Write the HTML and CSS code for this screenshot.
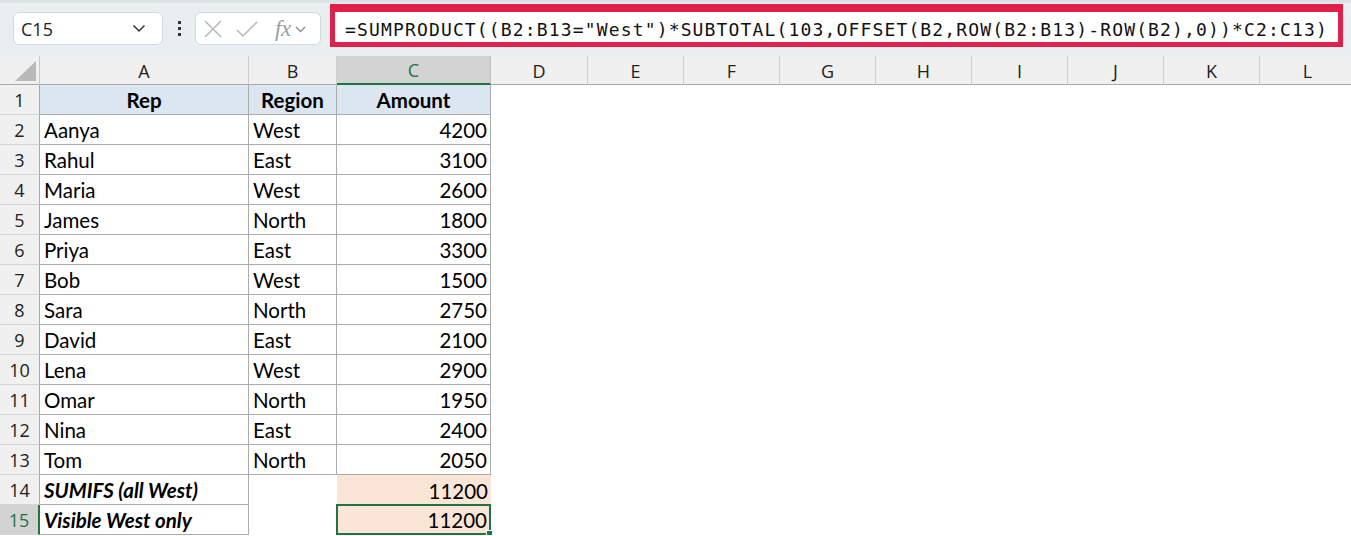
FILE: index.html
```html
<!DOCTYPE html>
<html>
<head>
<meta charset="utf-8">
<title>Sheet</title>
<link rel="stylesheet" href="styles.css">
</head>
<body>
<div class="bar">
  <div class="namebox">
    <span class="ref">C15</span>
    <svg class="chev" width="14" height="9" viewBox="0 0 14 9"><path d="M1.5 1.5 L7 7 L12.5 1.5" fill="none" stroke="#333" stroke-width="1.5"/></svg>
  </div>
  <div class="dots"><i></i><i></i><i></i></div>
  <div class="fxbox">
    <svg class="ico" width="20" height="20" viewBox="0 0 20 20"><path d="M2 2 L18 18 M18 2 L2 18" fill="none" stroke="#b5b8bb" stroke-width="1.5"/></svg>
    <svg class="ico" width="24" height="20" viewBox="0 0 24 20"><path d="M2 11 L8 17 L22 3" fill="none" stroke="#b5b8bb" stroke-width="1.5"/></svg>
    <span class="fx">fx</span>
    <svg class="chev2" width="11" height="7" viewBox="0 0 11 7"><path d="M1 1 L5.5 5.5 L10 1" fill="none" stroke="#8a8d90" stroke-width="1.3"/></svg>
  </div>
  <div class="formula">=SUMPRODUCT((B2:B13="West")*SUBTOTAL(103,OFFSET(B2,ROW(B2:B13)-ROW(B2),0))*C2:C13)</div>
</div>

<div class="sheet">
  <div class="corner"><span class="tri"></span></div>
  <div class="ch">A</div><div class="ch">B</div><div class="ch sel">C</div><div class="ch">D</div><div class="ch">E</div><div class="ch">F</div><div class="ch">G</div><div class="ch">H</div><div class="ch">I</div><div class="ch">J</div><div class="ch">K</div><div class="ch">L</div>

  <div class="rh">1</div><div class="c hd">Rep</div><div class="c hd">Region</div><div class="c hd">Amount</div><div class="e"></div><div class="e"></div><div class="e"></div><div class="e"></div><div class="e"></div><div class="e"></div><div class="e"></div><div class="e"></div><div class="e"></div>

  <div class="rh">2</div><div class="c">Aanya</div><div class="c">West</div><div class="c n">4200</div><div class="e"></div><div class="e"></div><div class="e"></div><div class="e"></div><div class="e"></div><div class="e"></div><div class="e"></div><div class="e"></div><div class="e"></div>

  <div class="rh">3</div><div class="c">Rahul</div><div class="c">East</div><div class="c n">3100</div><div class="e"></div><div class="e"></div><div class="e"></div><div class="e"></div><div class="e"></div><div class="e"></div><div class="e"></div><div class="e"></div><div class="e"></div>

  <div class="rh">4</div><div class="c">Maria</div><div class="c">West</div><div class="c n">2600</div><div class="e"></div><div class="e"></div><div class="e"></div><div class="e"></div><div class="e"></div><div class="e"></div><div class="e"></div><div class="e"></div><div class="e"></div>

  <div class="rh">5</div><div class="c">James</div><div class="c">North</div><div class="c n">1800</div><div class="e"></div><div class="e"></div><div class="e"></div><div class="e"></div><div class="e"></div><div class="e"></div><div class="e"></div><div class="e"></div><div class="e"></div>

  <div class="rh">6</div><div class="c">Priya</div><div class="c">East</div><div class="c n">3300</div><div class="e"></div><div class="e"></div><div class="e"></div><div class="e"></div><div class="e"></div><div class="e"></div><div class="e"></div><div class="e"></div><div class="e"></div>

  <div class="rh">7</div><div class="c">Bob</div><div class="c">West</div><div class="c n">1500</div><div class="e"></div><div class="e"></div><div class="e"></div><div class="e"></div><div class="e"></div><div class="e"></div><div class="e"></div><div class="e"></div><div class="e"></div>

  <div class="rh">8</div><div class="c">Sara</div><div class="c">North</div><div class="c n">2750</div><div class="e"></div><div class="e"></div><div class="e"></div><div class="e"></div><div class="e"></div><div class="e"></div><div class="e"></div><div class="e"></div><div class="e"></div>

  <div class="rh">9</div><div class="c">David</div><div class="c">East</div><div class="c n">2100</div><div class="e"></div><div class="e"></div><div class="e"></div><div class="e"></div><div class="e"></div><div class="e"></div><div class="e"></div><div class="e"></div><div class="e"></div>

  <div class="rh">10</div><div class="c">Lena</div><div class="c">West</div><div class="c n">2900</div><div class="e"></div><div class="e"></div><div class="e"></div><div class="e"></div><div class="e"></div><div class="e"></div><div class="e"></div><div class="e"></div><div class="e"></div>

  <div class="rh">11</div><div class="c">Omar</div><div class="c">North</div><div class="c n">1950</div><div class="e"></div><div class="e"></div><div class="e"></div><div class="e"></div><div class="e"></div><div class="e"></div><div class="e"></div><div class="e"></div><div class="e"></div>

  <div class="rh">12</div><div class="c">Nina</div><div class="c">East</div><div class="c n">2400</div><div class="e"></div><div class="e"></div><div class="e"></div><div class="e"></div><div class="e"></div><div class="e"></div><div class="e"></div><div class="e"></div><div class="e"></div>

  <div class="rh">13</div><div class="c">Tom</div><div class="c">North</div><div class="c n">2050</div><div class="e"></div><div class="e"></div><div class="e"></div><div class="e"></div><div class="e"></div><div class="e"></div><div class="e"></div><div class="e"></div><div class="e"></div>

  <div class="rh">14</div><div class="c bi">SUMIFS (all West)</div><div class="e"></div><div class="e fill n">11200</div><div class="e"></div><div class="e"></div><div class="e"></div><div class="e"></div><div class="e"></div><div class="e"></div><div class="e"></div><div class="e"></div><div class="e"></div>

  <div class="rh sel">15</div><div class="c bi">Visible West only</div><div class="e"></div><div class="e fill n active">11200<span class="handle"></span></div><div class="e"></div><div class="e"></div><div class="e"></div><div class="e"></div><div class="e"></div><div class="e"></div><div class="e"></div><div class="e"></div><div class="e"></div>
</div>
</body>
</html>
```

FILE: styles.css
```css
* { box-sizing: border-box; }

html, body {
  margin: 0;
  padding: 0;
  background: #ffffff;
  width: 1351px;
  height: 536px;
  overflow: hidden;
}

body {
  font-family: "Lato", "Liberation Sans", sans-serif;
  color: #000;
}

/* ---------- formula bar ---------- */
.bar {
  height: 56px;
  background: #e9eef1;
  border-top: 3px solid #dde2e5;
  display: flex;
  align-items: flex-start;
  padding-left: 13px;
}

.namebox {
  margin-top: 9px;
  width: 150px;
  height: 33px;
  background: #fff;
  border: 1px solid #d3d8dc;
  border-radius: 6px;
  display: flex;
  align-items: center;
  justify-content: space-between;
  padding: 0 16px 0 7px;
}

.ref {
  font-family: "Open Sans", "Liberation Sans", sans-serif;
  font-size: 18px;
  color: #222;
}

.dots {
  width: 32px;
  height: 33px;
  margin-top: 9px;
  display: flex;
  flex-direction: column;
  align-items: center;
  justify-content: center;
  gap: 3px;
}

.dots i {
  width: 3px;
  height: 3px;
  background: #333;
}

.fxbox {
  margin-top: 9px;
  width: 126px;
  height: 33px;
  background: #fff;
  border: 1px solid #d3d8dc;
  border-radius: 6px;
  display: flex;
  align-items: center;
  padding-left: 7px;
}

.fxbox .ico:first-child { margin-right: 12px; }
.fxbox .ico { flex: none; }

.fx {
  font-family: "Liberation Serif", "DejaVu Serif", serif;
  font-style: italic;
  font-size: 23px;
  color: #9a9da0;
  margin-left: 16px;
  letter-spacing: -0.5px;
  line-height: 1;
}

.chev2 { margin-left: 4px; margin-top: 2px; }

.formula {
  margin-top: 1px;
  margin-left: 9px;
  width: 1013px;
  height: 43px;
  background: #fff;
  border: 5px solid #e01f4b;
  border-top-width: 8px;
  padding-left: 10px;
  font-family: "DejaVu Sans Mono", "Liberation Mono", monospace;
  font-size: 18px;
  letter-spacing: 1.15px;
  line-height: 35px;
  color: #111;
  white-space: nowrap;
  overflow: hidden;
}

/* ---------- grid ---------- */
.sheet {
  display: grid;
  grid-template-columns: 40px 209px 88px 154px 97px repeat(8, 96px);
  grid-template-rows: 29px;
  grid-auto-rows: 30px;
  width: 1351px;
  overflow: hidden;
}

.corner {
  background: #f0f0f0;
  border-right: 1px solid #c9c9c9;
  border-bottom: 1px solid #a9a9a9;
  position: relative;
}

.tri {
  position: absolute;
  right: 3px;
  bottom: 3px;
  width: 21px;
  height: 20px;
  background: #b9b9b9;
  clip-path: polygon(100% 0, 100% 100%, 0 100%);
}

.ch {
  background: #f0f0f0;
  border-right: 1px solid #cfcfcf;
  border-bottom: 1px solid #a9a9a9;
  display: flex;
  align-items: center;
  justify-content: center;
  font-family: "Open Sans", "Liberation Sans", sans-serif;
  font-size: 18px;
  color: #222;
  padding-top: 1px;
}

.ch.sel {
  background: #d3d3d3;
  color: #217346;
  border-bottom: 2px solid #217346;
  border-right-color: #bdbdbd;
}

.rh {
  background: #f0f0f0;
  border-right: 1px solid #a9a9a9;
  border-bottom: 1px solid #d4d4d4;
  display: flex;
  align-items: center;
  justify-content: center;
  font-family: "Open Sans", "Liberation Sans", sans-serif;
  font-size: 18px;
  color: #222;
  padding-top: 1px;
}

.rh.sel {
  background: #d3d3d3;
  color: #217346;
  border-right: 2px solid #217346;
}

.c, .e {
  font-size: 20.5px;
  display: flex;
  align-items: center;
  padding: 1px 4px 0 4px;
  white-space: nowrap;
  overflow: visible;
}

.c {
  border-right: 1px solid #ababab;
  border-bottom: 1px solid #ababab;
}

.hd {
  background: #dce6f1;
  font-weight: 700;
  justify-content: center;
}

.n { justify-content: flex-end; padding-right: 3px; }

.bi { font-weight: 700; font-style: italic; }

.fill { background: #fbe5d6; }

.active {
  position: relative;
  border: 2px solid #217346;
  margin: -1px 0 0 -1px;
  padding-right: 2px;
}

.handle {
  position: absolute;
  right: -4px;
  bottom: -4px;
  width: 7px;
  height: 7px;
  background: #217346;
  border: 1px solid #fff;
}
```
